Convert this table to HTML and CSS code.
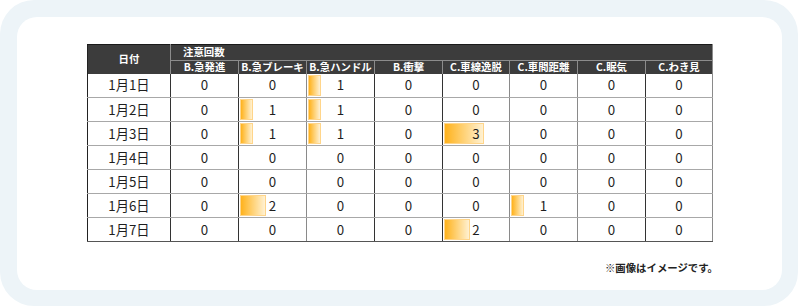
FILE: index.html
```html
<!DOCTYPE html>
<html lang="ja">
<head>
<meta charset="utf-8">
<link rel="stylesheet" href="styles.css">
</head>
<body>
<div class="frame">
  <div class="card">
    <table class="grid">
      <colgroup>
        <col class="c-date">
        <col class="c-num dark">
        <col class="c-num light">
        <col class="c-num dark">
        <col class="c-num dark">
        <col class="c-num2 light">
        <col class="c-num light">
        <col class="c-num dark">
        <col class="c-num2 light">
      </colgroup>
      <thead>
        <tr class="h1">
          <th rowspan="2" class="h-date">日付</th>
          <th colspan="8" class="h-group">注意回数</th>
        </tr>
        <tr class="h2">
          <th>B.急発進</th>
          <th>B.急ブレーキ</th>
          <th>B.急ハンドル</th>
          <th>B.衝撃</th>
          <th>C.車線逸脱</th>
          <th>C.車間距離</th>
          <th>C.眠気</th>
          <th>C.わき見</th>
        </tr>
      </thead>
      <tbody>
        <tr><td>1月1日</td><td>0</td><td>0</td><td class="b"><span class="bar" style="width:13px"></span><span class="val">1</span></td><td>0</td><td>0</td><td>0</td><td>0</td><td>0</td></tr>
        <tr><td>1月2日</td><td>0</td><td class="b"><span class="bar" style="width:13px"></span><span class="val">1</span></td><td class="b"><span class="bar" style="width:13px"></span><span class="val">1</span></td><td>0</td><td>0</td><td>0</td><td>0</td><td>0</td></tr>
        <tr><td>1月3日</td><td>0</td><td class="b"><span class="bar" style="width:13px"></span><span class="val">1</span></td><td class="b"><span class="bar" style="width:13px"></span><span class="val">1</span></td><td>0</td><td class="b"><span class="bar" style="width:40px"></span><span class="val">3</span></td><td>0</td><td>0</td><td>0</td></tr>
        <tr><td>1月4日</td><td>0</td><td>0</td><td>0</td><td>0</td><td>0</td><td>0</td><td>0</td><td>0</td></tr>
        <tr><td>1月5日</td><td>0</td><td>0</td><td>0</td><td>0</td><td>0</td><td>0</td><td>0</td><td>0</td></tr>
        <tr><td>1月6日</td><td>0</td><td class="b"><span class="bar" style="width:26px"></span><span class="val">2</span></td><td>0</td><td>0</td><td>0</td><td class="b"><span class="bar" style="width:13px"></span><span class="val">1</span></td><td>0</td><td>0</td></tr>
        <tr><td>1月7日</td><td>0</td><td>0</td><td>0</td><td>0</td><td class="b"><span class="bar" style="width:26px"></span><span class="val">2</span></td><td>0</td><td>0</td><td>0</td></tr>
      </tbody>
    </table>
    <p class="note">※画像はイメージです。</p>
  </div>
</div>
</body>
</html>
```

FILE: styles.css
```css
* { box-sizing: border-box; }
html, body { margin: 0; padding: 0; background: #fff; }
body {
  font-family: "Noto Sans CJK JP", "Noto Sans", sans-serif;
  color: #1e1e1e;
}
.frame {
  width: 798px;
  height: 306px;
  background: #edf4f8;
  border-radius: 34px;
  padding: 17px 16px 16px 17px;
}
.card {
  background: #fff;
  border-radius: 20px;
  height: 100%;
  padding: 27px 70px 0 70px;
}
.grid {
  border-collapse: collapse;
  table-layout: fixed;
  width: 626px;
  border-left: 1px solid #222;
}
.c-date { width: 83px; border-right: 1px solid #333; }
.c-num { width: 68px; }
.c-num2 { width: 67px; }
col.dark { border-right: 1px solid #333; }
col.light { border-right: 1px solid #8a8a8a; }

thead th {
  background: #3c3c3c;
  color: #fff;
  font-weight: 700;
  font-size: 10.4px;
  padding: 0;
  border-right: 1px solid #8c8c8c;
  border-left: 1px solid #8c8c8c;
  line-height: 1;
  white-space: nowrap;
}
thead tr.h1 th { border-top: 1px solid #1a1a1a; }
tr.h1 { height: 16px; }
tr.h2 { height: 13px; }
th.h-date { border-left: 1px solid #222; }
th.h-group {
  text-align: left;
  padding-left: 12px;
  border-bottom: 1px solid #8c8c8c;
}
tr.h2 th { text-align: center; }

tbody td {
  height: 24px;
  padding: 0;
  text-align: center;
  font-size: 13.3px;
  line-height: 22px;
  border-top: 1px solid #a8a8a8;
  border-bottom: 1px solid #a8a8a8;
  position: relative;
}
tbody tr:first-child td { border-top: none; }
tbody tr:last-child td { border-bottom: 1px solid #555; }

.bar {
  position: absolute;
  left: 1px;
  top: 1px;
  bottom: 1px;
  background: linear-gradient(to right, #ffb21c 0%, #ffcf6e 45%, #fff1d2 100%);
  border: 1px solid #ffd58a;
  z-index: 0;
}
.val {
  position: relative;
  z-index: 1;
}

.note {
  margin: 18px -6px 0 0;
  text-align: right;
  font-size: 10.4px;
  font-weight: 700;
  color: #222;
}
```
